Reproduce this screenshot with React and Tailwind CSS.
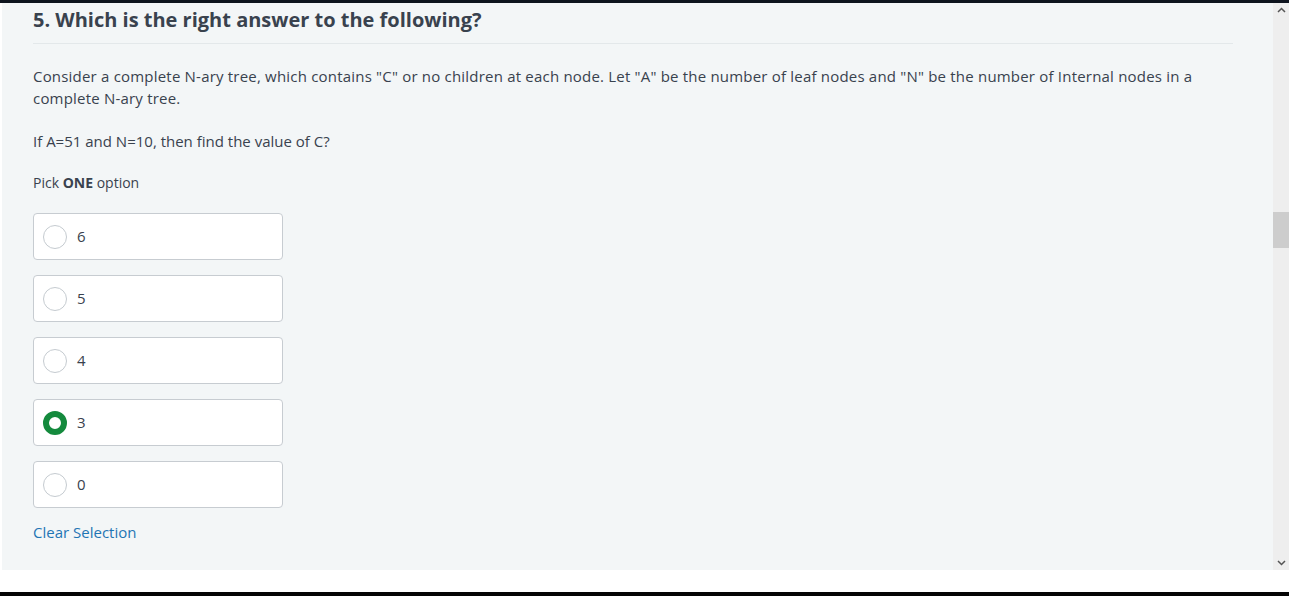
import React, { useState } from "react";

const options = ["6", "5", "4", "3", "0"];

const Radio = ({ checked }) =>
  checked ? (
    <span className="w-[24px] h-[24px] rounded-full border-[6px] border-[#148a3d] bg-white shrink-0" />
  ) : (
    <span className="w-[24px] h-[24px] rounded-full border border-[#c5cbd0] bg-white shrink-0" />
  );

const App = () => {
  const [picked, setPicked] = useState("3");

  return (
    <div className="w-[1289px] h-[596px] bg-white overflow-hidden flex flex-col font-['Open_Sans',sans-serif] text-[#39424e]">
      <div className="h-[3px] bg-[#0e141e] shrink-0" />
      <div className="flex h-[567px] shrink-0">
        <div className="flex-1 ml-[2px] bg-[#f3f6f7] pl-[31px] pr-[40px]">
          <div className="h-[41px] flex items-end pb-[10px] border-b border-[#e3e8ea]">
            <h1 className="text-[20px] font-bold leading-[26px]">5. Which is the right answer to the following?</h1>
          </div>
          <p className="mt-[21px] max-w-[1190px] text-[15px] leading-[22px] tracking-[0.2px]">
            Consider a complete N-ary tree, which contains "C" or no children at each node. Let "A" be the number of leaf nodes and "N" be the number of Internal nodes in a complete N-ary tree.
          </p>
          <p className="mt-[21px] text-[15px] leading-[22px]">If A=51 and N=10, then find the value of C?</p>
          <p className="mt-[20px] text-[14px] leading-[22px]">
            Pick <span className="font-bold">ONE</span> option
          </p>
          <div className="mt-[19px] flex flex-col gap-[15px]">
            {options.map((o) => (
              <button
                key={o}
                onClick={() => setPicked(o)}
                className="w-[250px] h-[47px] bg-white border border-[#c7ccd1] rounded-[4px] flex items-center gap-[10px] pl-[9px] text-left"
              >
                <Radio checked={picked === o} />
                <span className="text-[15px]">{o}</span>
              </button>
            ))}
          </div>
          <button onClick={() => setPicked(null)} className="mt-[13px] text-[15px] text-[#1f75b4]">
            Clear Selection
          </button>
        </div>
        <div className="w-[16px] bg-[#eeeeee] flex flex-col items-center justify-between py-[4px] relative">
          <svg width="9" height="6" viewBox="0 0 9 6"><path d="M1 5 L4.5 1.5 L8 5" fill="none" stroke="#555" strokeWidth="1.5" /></svg>
          <div className="absolute left-0 top-[209px] w-[16px] h-[36px] bg-[#cdcdcd]" />
          <svg width="9" height="6" viewBox="0 0 9 6"><path d="M1 1 L4.5 4.5 L8 1" fill="none" stroke="#555" strokeWidth="1.5" /></svg>
        </div>
      </div>
      <div className="flex-1" />
      <div className="h-[4px] bg-[#050505] shrink-0" />
    </div>
  );
};

export default App;
